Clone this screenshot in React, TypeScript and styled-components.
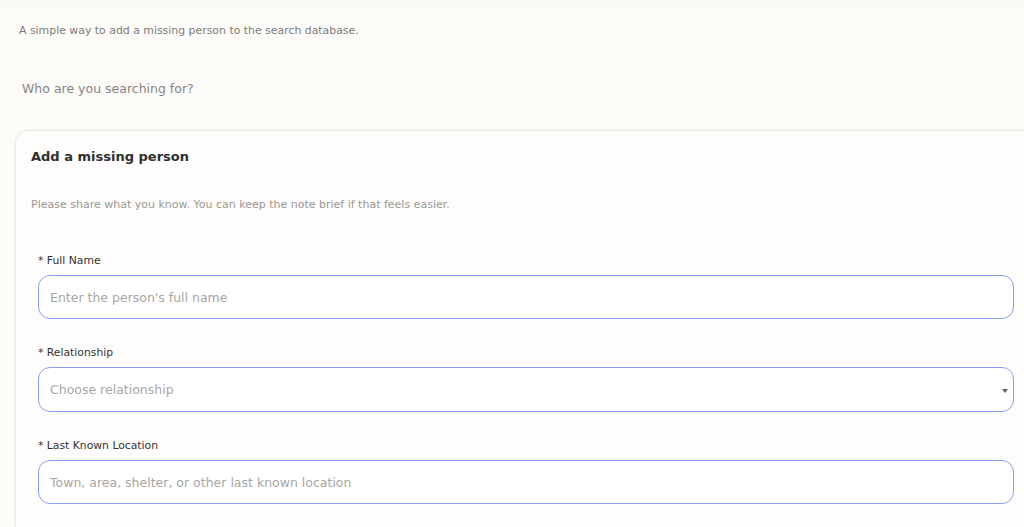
import { createGlobalStyle } from "styled-components";
import styled from "styled-components";

const GlobalStyle = createGlobalStyle`
  html, body {
    margin: 0;
    padding: 0;
    background: #fcfbf8;
    overflow-x: hidden;
  }
  * { box-sizing: border-box; }
  body {
    font-family: "DejaVu Sans", "Open Sans", sans-serif;
  }
`;

export default function App() {
  return (
    <>
      <GlobalStyle />
      <Page>
        <Intro>A simple way to add a missing person to the search database.</Intro>
        <Question>Who are you searching for?</Question>

        <Card>
          <CardTitle>Add a missing person</CardTitle>
          <CardHint>Please share what you know. You can keep the note brief if that feels easier.</CardHint>

          <Form>
            <Field>
              <Label>* Full Name</Label>
              <TextInput placeholder="Enter the person's full name" />
            </Field>

            <Field>
              <Label>* Relationship</Label>
              <SelectWrap>
                <Select defaultValue="">
                  <option value="" disabled>Choose relationship</option>
                  <option>Parent</option>
                  <option>Child</option>
                  <option>Sibling</option>
                  <option>Friend</option>
                </Select>
                <Caret />
              </SelectWrap>
            </Field>

            <Field>
              <Label>* Last Known Location</Label>
              <TextInput placeholder="Town, area, shelter, or other last known location" />
            </Field>
          </Form>
        </Card>
      </Page>
    </>
  );
}

const Page = styled.div`
  min-height: 100vh;
  padding: 23px 0 0 15px;
  background: linear-gradient(180deg, #f9f8f5 0px, #fcfbf8 14px);
`;

const Intro = styled.p`
  margin: 0 0 0 4px;
  font-size: 10.9px;
  line-height: 16px;
  color: #7d7b78;
`;

const Question = styled.h3`
  margin: 41px 0 0 7px;
  font-size: 12.5px;
  font-weight: 400;
  line-height: 18px;
  color: #878583;
`;

const Card = styled.section`
  margin: 32px -13px 0 0;
  padding: 16px 23px 24px 15px;
  background: #fefdfb;
  border: 1px solid #ece9e3;
  border-right: none;
  border-bottom: none;
  border-radius: 14px 0 0 0;
  box-shadow: -1px 0 3px rgba(0, 0, 0, 0.03);
`;

const CardTitle = styled.h2`
  margin: 0;
  font-size: 13px;
  font-weight: 600;
  line-height: 20px;
  color: #2f2f2f;
`;

const CardHint = styled.p`
  margin: 30px 0 0;
  font-size: 11px;
  line-height: 16px;
  color: #9a9894;
`;

const Form = styled.div`
  margin-top: 41px;
  padding-left: 7px;
  display: flex;
  flex-direction: column;
  gap: 27px;
`;

const Field = styled.div`
  display: flex;
  flex-direction: column;
  gap: 7px;
`;

const Label = styled.label`
  font-size: 10.8px;
  line-height: 14px;
  font-weight: 500;
  color: #333;
`;

const TextInput = styled.input`
  width: 100%;
  height: 44px;
  padding: 0 11px;
  border: 1px solid #8a9cf5;
  border-radius: 12px;
  background: #fff;
  font-family: inherit;
  font-size: 12.5px;
  color: #333;
  outline: none;
  &::placeholder {
    color: #a8a6a3;
  }
`;

const SelectWrap = styled.div`
  position: relative;
`;

const Select = styled.select`
  width: 100%;
  height: 45px;
  padding: 0 11px;
  border: 1px solid #8a9cf5;
  border-radius: 12px;
  background: #fff;
  font-family: inherit;
  font-size: 12.5px;
  color: #a8a6a3;
  appearance: none;
  outline: none;
`;

const Caret = styled.span`
  position: absolute;
  right: 6px;
  top: 22px;
  width: 0;
  height: 0;
  border-left: 3.5px solid transparent;
  border-right: 3.5px solid transparent;
  border-top: 4px solid #5f5f5f;
  pointer-events: none;
`;
